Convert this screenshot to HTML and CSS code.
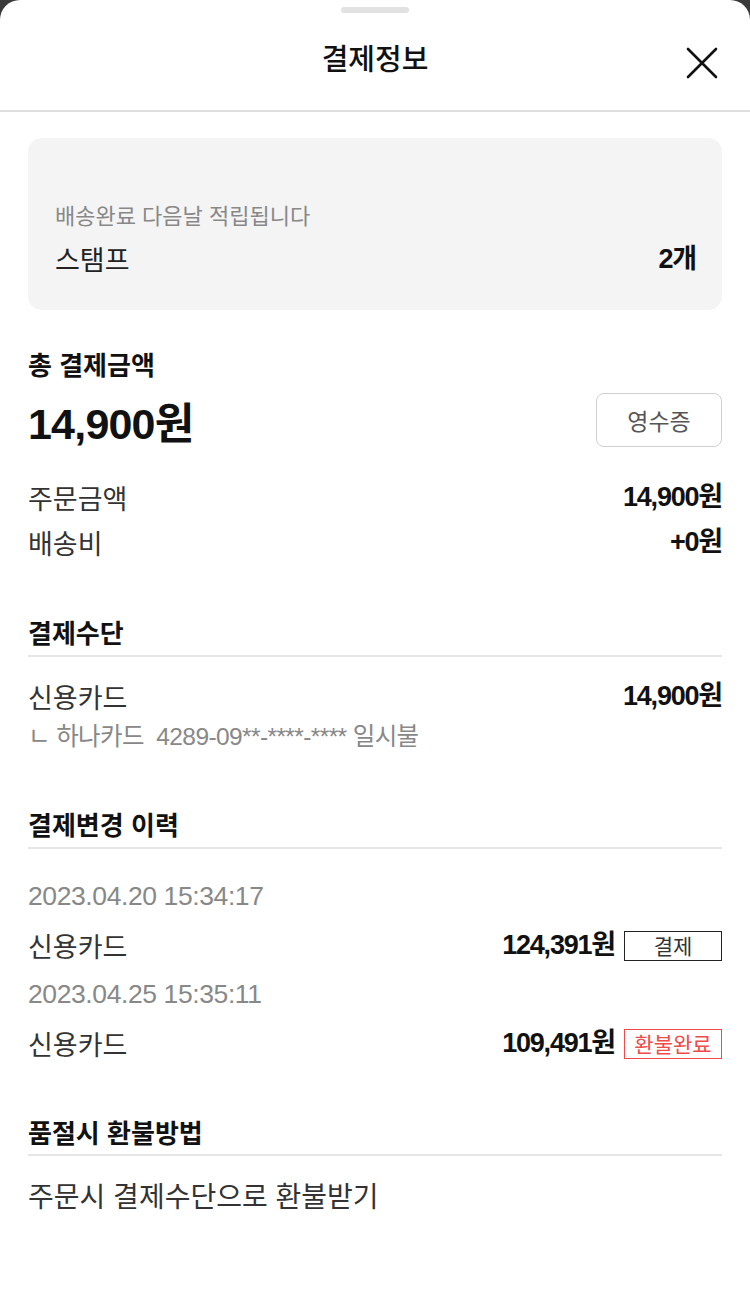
FILE: index.html
```html
<!DOCTYPE html>
<html lang="ko">
<head>
<meta charset="utf-8">
<title>결제정보</title>
<link rel="stylesheet" href="styles.css">
</head>
<body>
<div class="sheet">
  <div class="handle"></div>
  <header class="head">
    <h1 class="title">결제정보</h1>
    <button class="close" aria-label="닫기">
      <svg width="32" height="32" viewBox="0 0 32 32"><path d="M2 2 L30 30 M30 2 L2 30" stroke="#111" stroke-width="2.6" fill="none" stroke-linecap="round"/></svg>
    </button>
  </header>
  <main class="content">
    <section class="stamp">
      <p class="stamp-note">배송완료 다음날 적립됩니다</p>
      <div class="row stamp-row">
        <span class="stamp-label">스탬프</span>
        <span class="num bold">2개</span>
      </div>
    </section>

    <section class="total">
      <h2 class="sec-title">총 결제금액</h2>
      <div class="total-row">
        <span class="total-amount">14,900원</span>
        <button class="receipt">영수증</button>
      </div>
      <div class="row line first">
        <span>주문금액</span><span class="num bold">14,900원</span>
      </div>
      <div class="row line">
        <span>배송비</span><span class="num bold">+0원</span>
      </div>
    </section>

    <section class="block pay-block">
      <h2 class="sec-title ruled">결제수단</h2>
      <div class="row line pay">
        <span>신용카드</span><span class="num bold">14,900원</span>
      </div>
      <p class="card-info">ㄴ 하나카드 &nbsp;4289-09**-****-**** 일시불</p>
    </section>

    <section class="block hist-block">
      <h2 class="sec-title ruled">결제변경 이력</h2>
      <div class="history">
        <p class="date">2023.04.20 15:34:17</p>
        <div class="row hline">
          <span>신용카드</span>
          <span class="right"><span class="num bold">124,391원</span><span class="badge">결제</span></span>
        </div>
        <p class="date">2023.04.25 15:35:11</p>
        <div class="row hline">
          <span>신용카드</span>
          <span class="right"><span class="num bold">109,491원</span><span class="badge red">환불완료</span></span>
        </div>
      </div>
    </section>

    <section class="block refund-block">
      <h2 class="sec-title ruled">품절시 환불방법</h2>
      <p class="refund">주문시 결제수단으로 환불받기</p>
    </section>
  </main>
</div>
</body>
</html>
```
FILE: styles.css
```css
* { box-sizing: border-box; }
html, body { margin: 0; padding: 0; }
body {
  background: #3a3a3a;
  font-family: "Noto Sans CJK KR", sans-serif;
  color: #333;
}
.sheet {
  background: #fff;
  border-radius: 20px 20px 0 0;
  min-height: 1293px;
  padding-top: 7px;
}
.handle {
  width: 68px;
  height: 6px;
  border-radius: 3px;
  background: #e2e2e2;
  margin: 0 auto;
}
.head {
  height: 99px;
  padding-bottom: 9px;
  display: flex;
  align-items: center;
  justify-content: center;
  border-bottom: 2px solid #dedede;
  position: relative;
}
.title {
  margin: 0;
  font-size: 29px;
  font-weight: 500;
  color: #111;
  line-height: 36px;
}
.close {
  position: absolute;
  right: 32px;
  top: 34px;
  border: 0;
  background: none;
  padding: 0;
  width: 32px;
  height: 32px;
}
.content { padding: 26px 28px 0; }
.row {
  display: flex;
  justify-content: space-between;
  align-items: center;
}
.num { font-family: "Liberation Sans", "Noto Sans CJK KR", sans-serif; }
.bold { font-weight: 700; letter-spacing: -1.2px; color: #111; }
.stamp {
  background: #f4f4f4;
  border-radius: 14px;
  height: 172px;
  padding: 61px 26px 0 27px;
}
.stamp-note {
  margin: 0;
  font-size: 22px;
  line-height: 30px;
  color: #888;
}
.stamp-row {
  margin-top: 12px;
  font-size: 27px;
  line-height: 36px;
}
.stamp-label { color: #222; }
.total { padding-top: 39px; }
.sec-title {
  margin: 0;
  font-size: 26px;
  font-weight: 700;
  color: #111;
  line-height: 30px;
}
.total-row {
  display: flex;
  justify-content: space-between;
  align-items: center;
  margin-top: 10px;
}
.total-amount {
  font-family: "Liberation Sans", "Noto Sans CJK KR", sans-serif;
  font-size: 43px;
  font-weight: 700;
  color: #111;
  letter-spacing: -0.8px;
}
.receipt {
  width: 126px;
  height: 54px;
  border: 1.5px solid #cfcfcf;
  border-radius: 8px;
  background: #fff;
  font-size: 23px;
  color: #555;
  font-family: "Noto Sans CJK KR", sans-serif;
}
.line {
  font-size: 27px;
  line-height: 45px;
  color: #333;
}
.line.first { margin-top: 24px; }
.block { padding-top: 52px; }
.hist-block { padding-top: 57px; }
.refund-block { padding-top: 49px; }
.ruled {
  padding-bottom: 8px;
  border-bottom: 2px solid #e6e6e6;
  line-height: 30px;
  height: 40px;
}
.refund-block .ruled { padding-bottom: 7px; height: 39px; }
.pay { margin-top: 17px; }
.card-info {
  margin: 3px 0 0;
  font-size: 24.5px;
  line-height: 30px;
  color: #888;
  letter-spacing: -0.6px;
  font-family: "Liberation Sans", "Noto Sans CJK KR", sans-serif;
}
.history { padding-top: 23px; }
.date {
  margin: 0;
  font-family: "Liberation Sans", "Noto Sans CJK KR", sans-serif;
  font-size: 26.5px;
  color: #888;
  line-height: 49px;
  letter-spacing: -0.4px;
}
.hline {
  font-size: 27px;
  line-height: 49px;
  color: #333;
}
.right { display: flex; align-items: center; gap: 9px; }
.badge {
  width: 98px;
  height: 30px;
  border: 1.5px solid #222;
  font-size: 21px;
  line-height: 26px;
  text-align: center;
  color: #333;
  letter-spacing: 0;
}
.badge.red { border-color: #f04a4a; color: #f04a4a; }
.refund {
  margin: 21px 0 0;
  font-size: 28px;
  line-height: 36px;
  color: #333;
}
```
